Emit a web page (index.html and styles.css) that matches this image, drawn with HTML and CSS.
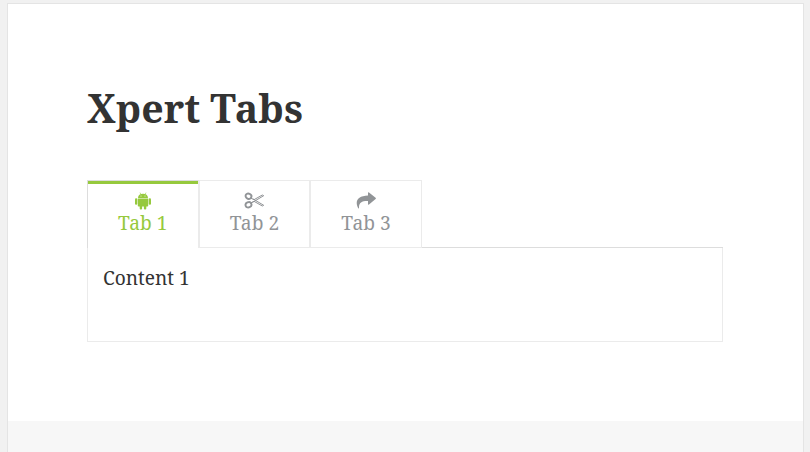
FILE: index.html
```
<!DOCTYPE html>
<html lang="en"><head><meta charset="utf-8"><title>Xpert Tabs</title><link rel="stylesheet" href="styles.css"></head>
<body>
<article class="page">
<div class="entry">
<h1>Xpert Tabs</h1>
<div class="tabs">
<nav class="tab-list">
<a class="tab active"><svg class="icon" viewBox="0 0 20 18"><g fill="currentColor"><path d="M5 5.900C5.200 3.300 7 1.800 10 1.800s4.800 1.500 5 4.100zM4.800 6.500h10.400v7.200q0 .8-.8.800H5.600q-.8 0-.8-.8z"/><rect x="2" y="6.300" width="2.300" height="6.500" rx="1.100"/><rect x="15.700" y="6.300" width="2.300" height="6.500" rx="1.100"/><rect x="6.700" y="12" width="2.400" height="5.500" rx="1"/><rect x="10.900" y="12" width="2.400" height="5.500" rx="1"/></g><path d="M7 .6l1 2M13 .6l-1 2" stroke="currentColor" stroke-width=".6"/><circle cx="8" cy="4.100" r=".5" fill="#fff"/><circle cx="12" cy="4.100" r=".5" fill="#fff"/></svg><span>Tab 1</span></a>
<a class="tab"><svg class="icon" viewBox="0 0 20 18"><g fill="none" stroke="currentColor" stroke-width="1.900"><ellipse cx="4.500" cy="4.200" rx="3" ry="2.600" transform="rotate(25 4.500 4.200)"/><ellipse cx="4.500" cy="12.800" rx="3" ry="2.600" transform="rotate(-25 4.500 12.800)"/><path d="M6.800 6.100l3.200 1.600L18.300 3l1.400.7L8.800 10.200l-2 .9M6.800 10.900l3.200-1.600L18.300 14l1.400-.7L8.800 6.800" stroke-width="1"/></g></svg><span>Tab 2</span></a>
<a class="tab"><svg class="icon" viewBox="0 0 20 18"><path fill="currentColor" d="M12 .9q0-1.200 1-.5l6.600 5.400q.6.600 0 1.200L13 12.400q-1 .7-1-.5V9C6 8.800 2.800 10.500 3 16q0 1-.7.200C-1.500 9.500 1.500 3.600 12 3.400z"/></svg><span>Tab 3</span></a>
<span class="tab-fill"></span>
</nav>
<section class="panel">Content 1</section>
</div></div>
<footer></footer>
</article>
</body></html>
```
FILE: styles.css
```
* { box-sizing: border-box; }
body { margin: 0; padding: 3px 6px 0 7px; background: #f1f1f1; font: 19px/32px "Noto Serif", "Droid Serif", "Liberation Serif", serif; color: #333; overflow: hidden; }
.page { height: 449px; display: flex; flex-direction: column; background: #fff; border: 1px solid #e4e4e4; border-bottom: 0; }
.entry { height: 417px; padding: 80px 80px 0 79px; }
h1 { margin: 0 0 48px; font-size: 39.3px; line-height: 48px; height: 48px; }
.tab-list { display: flex; }
.tab { width: 111.6px; height: 68px; padding-top: 11px; border: 1px solid #ebebeb; display: flex; flex-direction: column; align-items: center; color: #919497; font-size: 19.2px; line-height: 22px; }
.active { color: #96c93d; border-top-color: #ddd; border-left-color: #ddd; border-bottom: 0; box-shadow: inset 0 3px #96c93d; }
.icon { width: 20px; height: 18px; margin-bottom: 2px; }
.tab-fill { flex: 1; border-bottom: 1px solid #ddd; }
.panel { height: 94px; padding: 14px 15px; border: 1px solid #ebebeb; border-top: 0; font-size: 19.1px; }
footer { flex: 1; background: #f7f7f7; }
```
